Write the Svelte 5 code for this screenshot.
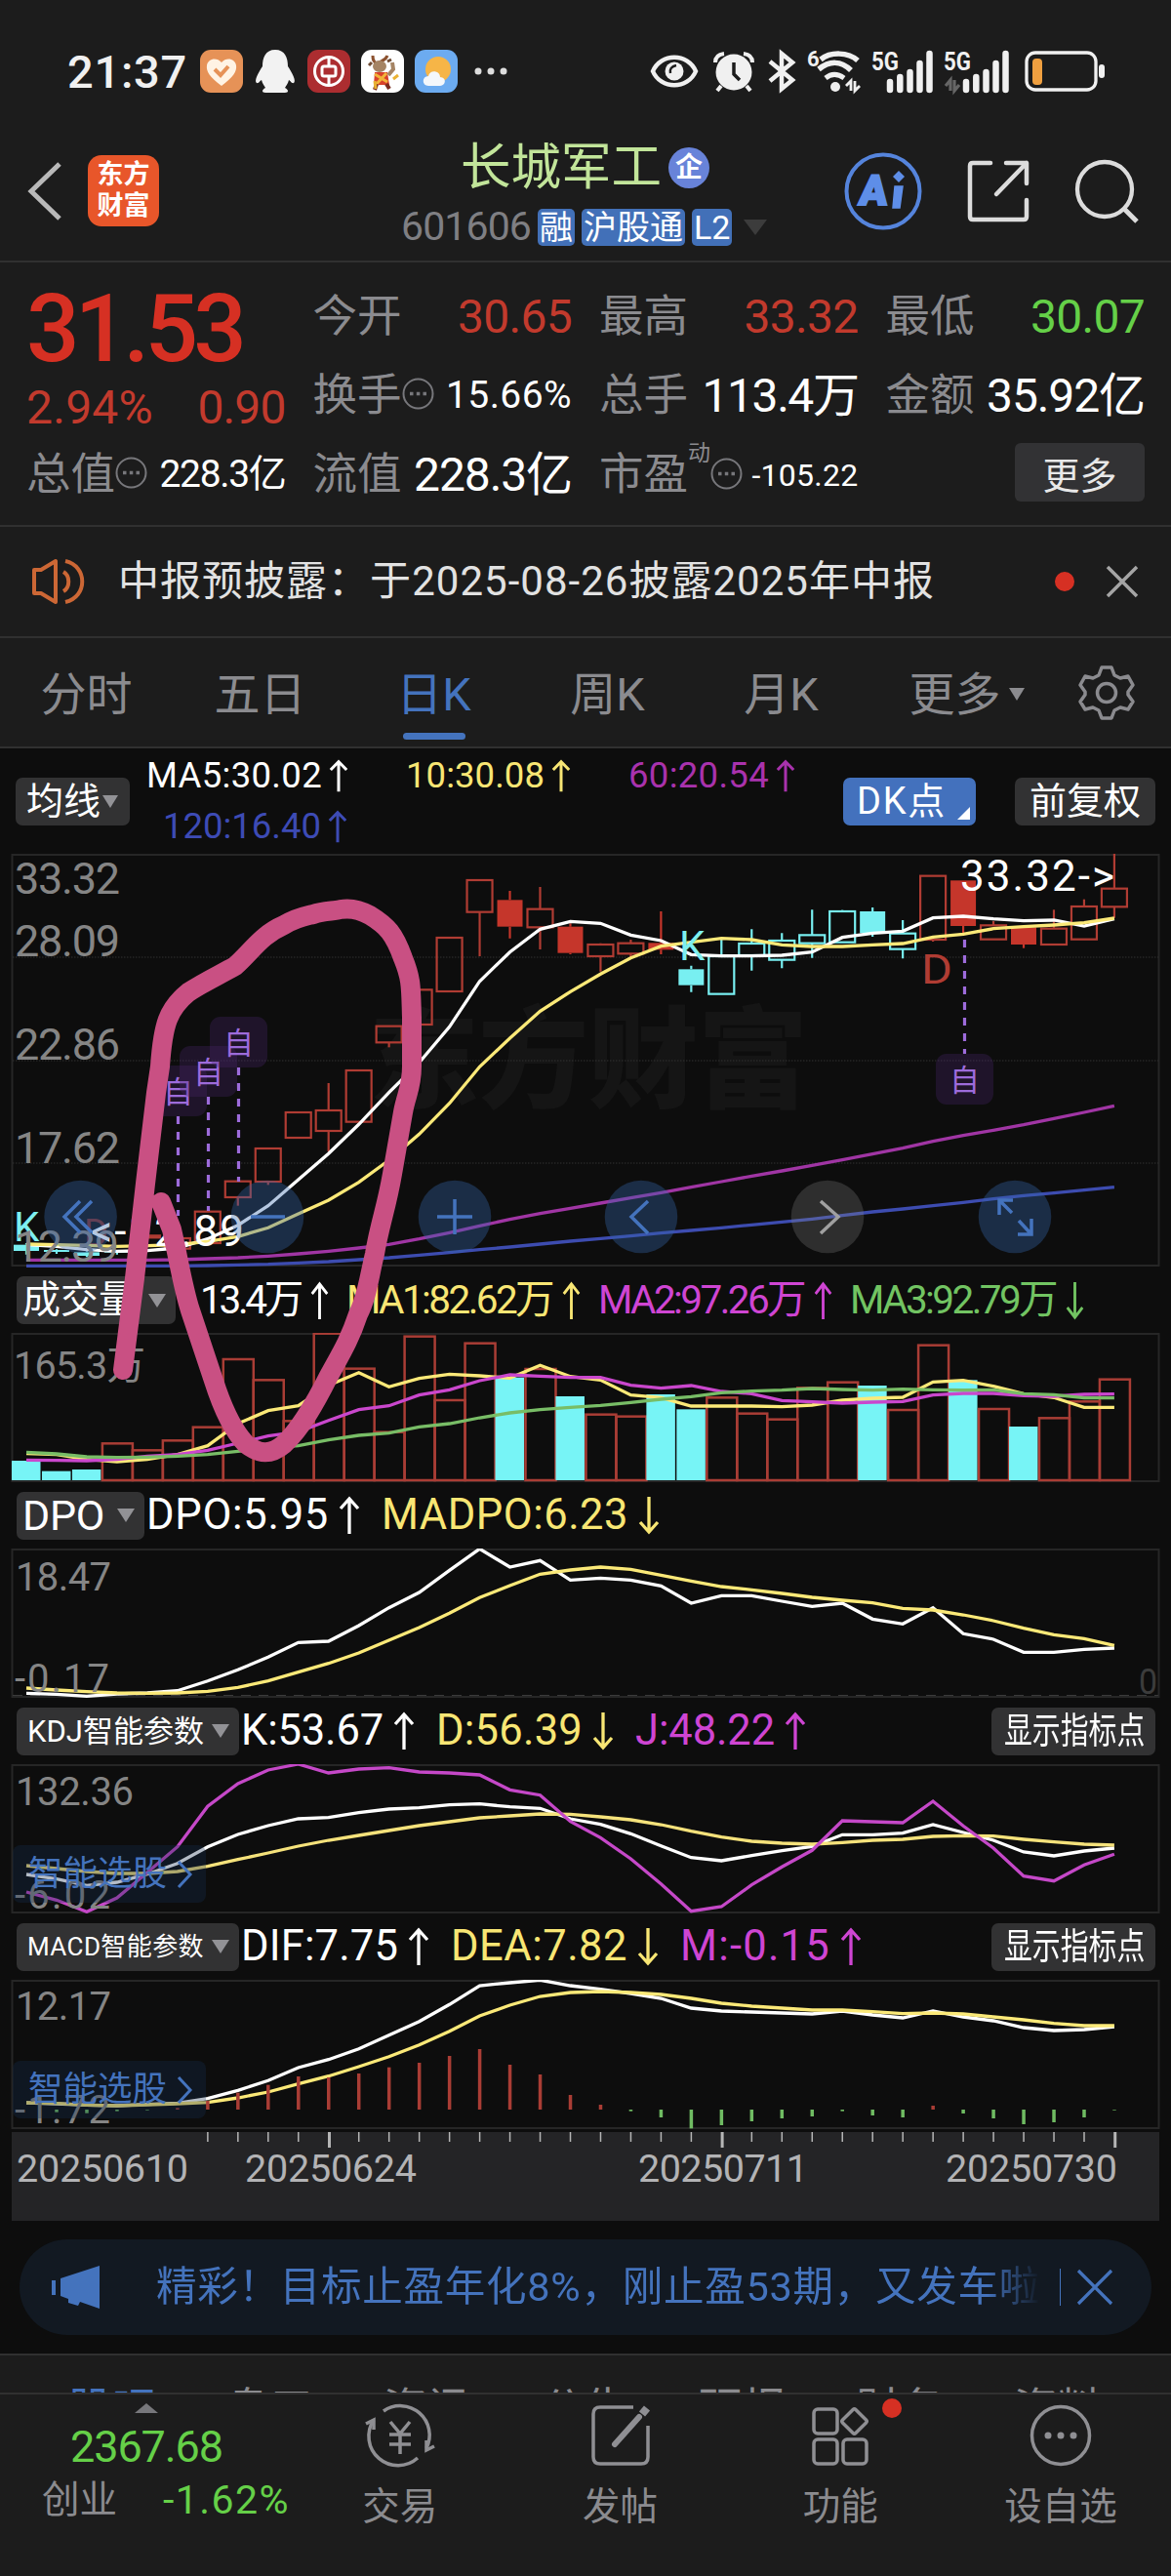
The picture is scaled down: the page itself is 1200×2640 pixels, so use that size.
<script>
	const STEP = 30.97;
	const x = (i) => 27 + i * STEP;

	// chart values are stored in thirds of a pixel, counted from the top of each strip
	const line = (values, top) =>
		values.map((v, i) => x(i).toFixed(1) + ',' + ((v - top) / 3).toFixed(1)).join(' ');

	// spread the letters of a text over a given width
	function fit(node, width) {
		const count = [...node.textContent].length;
		const natural = node.getBoundingClientRect().width;
		node.style.letterSpacing = (width - natural) / count + 'px';
	}

	// [kind, body top, body bottom, high, low]
	const candles = [
		['C', 1250, 1269, 1245, 1280], ['C', 1266, 1272, 1264, 1278], ['C', 1273, 1284, 1270, 1288],
		['C', 1268, 1274, 1266, 1280], ['r', 1222, 1228, 1222, 1228], ['r', 1230, 1262, 1230, 1262],
		['r', 1148, 1245, 1148, 1245], ['r', 1055, 1104, 1055, 1130], ['r', 954, 1056, 954, 1066],
		['r', 843, 921, 843, 921], ['r', 837, 900, 753, 963], ['r', 714, 872, 714, 872],
		['r', 578, 628, 578, 643], ['r', 466, 573, 466, 573], ['r', 306, 471, 306, 471],
		['r', 129, 227, 129, 363], ['R', 190, 272, 162, 308], ['r', 218, 274, 150, 342],
		['R', 272, 353, 262, 357], ['r', 327, 363, 323, 410], ['r', 323, 355, 312, 368],
		['R', 322, 343, 225, 357], ['C', 403, 452, 392, 473], ['c', 363, 479, 310, 479],
		['c', 324, 360, 280, 407], ['c', 315, 374, 292, 400], ['c', 298, 323, 220, 368],
		['c', 225, 320, 221, 320], ['C', 225, 292, 213, 303], ['c', 293, 341, 252, 370],
		['r', 116, 312, 116, 318], ['R', 130, 270, 130, 300], ['r', 268, 311, 255, 311],
		['R', 274, 327, 274, 338], ['r', 278, 327, 220, 327], ['r', 210, 311, 188, 311],
		['r', 155, 211, 48, 245]
	];
	const ma5 = [1250, 1255, 1265, 1270, 1268, 1260, 1232, 1190, 1130, 1050, 970, 880, 782, 690, 580, 440, 350, 280, 256, 262, 298, 315, 358, 362, 362, 360, 350, 305, 292, 286, 245, 240, 248, 254, 252, 270, 248];
	const ma10 = [1248, 1250, 1252, 1255, 1253, 1250, 1240, 1225, 1198, 1155, 1113, 1058, 990, 910, 815, 703, 615, 532, 472, 418, 368, 332, 320, 308, 312, 328, 333, 333, 328, 324, 304, 295, 278, 272, 267, 260, 246];
	const ma60 = [1297, 1297, 1297, 1297, 1297, 1296, 1293, 1290, 1285, 1278, 1270, 1260, 1249, 1232, 1213, 1192, 1172, 1154, 1138, 1122, 1106, 1090, 1073, 1056, 1039, 1023, 1006, 989, 971, 953, 932, 914, 898, 881, 862, 843, 823];
	const ma120 = [1315, 1315, 1315, 1315, 1315, 1315, 1314, 1312, 1310, 1306, 1302, 1296, 1290, 1282, 1274, 1265, 1257, 1248, 1239, 1231, 1223, 1214, 1206, 1198, 1189, 1180, 1171, 1160, 1149, 1140, 1130, 1120, 1109, 1099, 1091, 1082, 1073];

	const volumes = [594, 626, 621, 541, 562, 532, 491, 282, 346, 472, 203, 311, 506, 212, 408, 233, 338, 312, 396, 452, 458, 390, 436, 400, 449, 467, 370, 353, 363, 438, 239, 346, 435, 489, 463, 412, 344];
	const falling = [0, 1, 2, 16, 18, 21, 22, 28, 31, 33];
	const volA = [572, 575, 590, 597, 590, 575, 548, 480, 440, 425, 362, 323, 367, 341, 328, 333, 340, 301, 335, 346, 392, 400, 426, 426, 426, 428, 423, 408, 402, 399, 352, 347, 365, 388, 400, 430, 430];
	const volB = [592, 593, 594, 590, 580, 575, 562, 540, 518, 505, 470, 437, 425, 392, 376, 348, 330, 334, 338, 338, 362, 371, 363, 381, 388, 409, 413, 417, 414, 412, 392, 387, 387, 394, 396, 390, 389];
	const volC = [568, 573, 582, 584, 583, 580, 575, 565, 555, 548, 530, 516, 509, 490, 480, 462, 447, 437, 430, 424, 415, 405, 397, 385, 380, 377, 372, 375, 377, 374, 376, 377, 376, 388, 391, 401, 401];

	const dpo = [1308, 1311, 1317, 1310, 1307, 1300, 1270, 1236, 1197, 1152, 1148, 1100, 1045, 998, 930, 864, 920, 900, 960, 954, 960, 978, 1031, 1008, 1008, 1025, 1041, 1031, 1080, 1095, 1045, 1125, 1142, 1182, 1182, 1173, 1169];
	const madpo = [1292, 1298, 1303, 1307, 1308, 1307, 1302, 1290, 1270, 1243, 1216, 1184, 1145, 1106, 1062, 1014, 977, 942, 929, 920, 927, 945, 963, 980, 990, 1001, 1013, 1022, 1030, 1047, 1052, 1067, 1085, 1108, 1128, 1140, 1161];

	const kdjK = [546, 560, 580, 570, 545, 512, 461, 423, 396, 375, 371, 356, 345, 341, 332, 329, 338, 343, 375, 392, 421, 458, 494, 504, 488, 473, 460, 424, 424, 419, 393, 417, 441, 477, 489, 474, 465];
	const kdjD = [519, 528, 537, 543, 543, 537, 521, 500, 480, 459, 441, 426, 411, 396, 384, 372, 366, 360, 361, 369, 378, 393, 413, 431, 444, 450, 453, 448, 441, 438, 429, 427, 428, 438, 446, 453, 456];
	const kdjJ = [600, 625, 661, 618, 540, 461, 337, 267, 225, 207, 234, 222, 218, 231, 234, 240, 286, 302, 383, 433, 498, 575, 659, 645, 578, 523, 472, 381, 384, 387, 321, 397, 465, 551, 566, 517, 484];

	const dif = [1248, 1251, 1255, 1257, 1253, 1249, 1235, 1210, 1180, 1140, 1115, 1082, 1040, 998, 946, 888, 879, 871, 888, 899, 912, 927, 957, 966, 969, 972, 975, 966, 978, 987, 966, 984, 996, 1017, 1026, 1023, 1014];
	const dea = [1248, 1250, 1255, 1257, 1254, 1251, 1247, 1233, 1215, 1190, 1166, 1137, 1106, 1070, 1028, 981, 948, 921, 909, 906, 909, 915, 927, 942, 951, 957, 963, 963, 968, 974, 972, 975, 984, 993, 1004, 1011, 1011];
	const macd = [0, -8, -11, -5, -2, 5, 27, 52, 76, 102, 99, 111, 130, 144, 165, 186, 138, 108, 45, 15, -5, -24, -58, -48, -36, -27, -21, -5, -18, -24, 12, -12, -27, -45, -39, -24, -2];

	// x, top of the chip, start and end of the dashed line
	const flags = [
		[182.5, 217, 269, 371],
		[213.5, 197, 249, 366],
		[244.5, 167, 219, 336],
		[988.5, 205, 88, 205]
	];

	const tabs = ['分时', '五日', '日K', '周K', '月K', '更多'];
	const pages = ['股吧', '盘口', '资讯', '公告', '研报', '财务', '资料'];
	const ticks = Array.from({ length: 31 }, (_, i) => i + 6);
</script>

{#snippet arrow(up, w)}
	<svg class="arrow" width={w} height="40" viewBox="0 0 22 40" preserveAspectRatio="none">
		<path d={up ? 'M11 39V3M2 13L11 3L20 13' : 'M11 1V37M2 27L11 37L20 27'} fill="none" stroke="currentColor" stroke-width="3.300" />
	</svg>
{/snippet}

{#snippet item(text, width, up, color)}
	<span class="item {color}"><span use:fit={width}>{text}</span>{@render arrow(up, 22)}</span>
{/snippet}

{#snippet info()}
	<svg class="info" width="33" height="33" viewBox="0 0 33 33">
		<circle cx="16.500" cy="16.500" r="15" fill="none" stroke="#77777b" stroke-width="2" />
		<path d="M8 16.500h3.500M14.800 16.500h3.500M21.500 16.500h3.500" stroke="#77777b" stroke-width="3.500" />
	</svg>
{/snippet}

{#snippet signal(dim)}
	<svg class="signal" width={dim ? 67 : 62} height="46" viewBox={dim ? '0 0 67 46' : '4 0 62 46'}>
		<text x={dim ? 0 : 4} y="22" font-size="26" font-weight="700" fill="#f0f0f0" textLength="28" lengthAdjust="spacingAndGlyphs">5G</text>
		{#if dim}
			<path d="M7 43V32L2 38M11 32V43L16 37" stroke="#666" stroke-width="3.200" fill="none" />
		{/if}
		<path d="M23 42V34M33.300 42V29M43.500 42V24M53.500 42V15M63.500 42V5" stroke="#f0f0f0" stroke-width="6.500" stroke-linecap="round" />
	</svg>
{/snippet}

{#snippet caret()}
	<svg class="caret" width="18" height="14" viewBox="0 0 18 14"><path d="M0 0H18L9 14Z" fill="#929296" /></svg>
{/snippet}

<div class="screen">
	<div class="status">
		<span class="time" use:fit={123}>21:37</span>
		<div class="apps">
			<svg width="44" height="44" viewBox="0 0 44 44">
				<rect width="44" height="44" rx="11" fill="#e69257" />
				<path d="M22 37C10 28 6 22 7 16C8 9 17 7 22 13C27 7 36 9 37 16C38 22 34 28 22 37Z" fill="#fff3e4" />
				<path d="M15 20L21 26L29 17" stroke="#e69257" stroke-width="4" fill="none" />
			</svg>
			<svg width="44" height="44" viewBox="0 0 44 44">
				<path d="M22 0C12 0 9 8 9 17C5 23 0 32 3 34C5 35 7 31 8 31C9 35 11 37 12 39C8 41 8 44 12 44H32C36 44 36 41 32 39C33 37 35 35 36 31C37 31 39 35 41 34C44 32 39 23 35 17C35 8 32 0 22 0Z" fill="#f2f2f2" />
			</svg>
			<svg width="44" height="44" viewBox="0 0 44 44">
				<rect width="44" height="44" rx="11" fill="#ac2d30" />
				<circle cx="22" cy="22" r="14.500" fill="none" stroke="#fff" stroke-width="3" />
				<rect x="15" y="17" width="14" height="10" rx="2" fill="none" stroke="#fff" stroke-width="3" />
				<path d="M22 8V17M22 27V36" stroke="#fff" stroke-width="3" />
			</svg>
			<svg width="44" height="44" viewBox="0 0 44 44">
				<rect width="44" height="44" rx="11" fill="#fff" />
				<path d="M12 6C12 13 15 14 18 13C22 11 25 11 27 6" stroke="#8c5230" stroke-width="3" fill="none" />
				<ellipse cx="19" cy="17" rx="7" ry="6" fill="#a58464" />
				<path d="M11 13L8 16M27 12L31 10" stroke="#6e4a32" stroke-width="3" />
				<path d="M14 23H27L29 36H13Z" fill="#d8412b" />
				<path d="M14 25L27 33M26 24L15 36" stroke="#f2b43a" stroke-width="3" />
				<path d="M28 26L33 20L32 13" stroke="#a58464" stroke-width="4" fill="none" />
				<path d="M16 35L14 41M26 35L29 40" stroke="#7a2c20" stroke-width="4" />
				<path d="M33 30L38 26M14 32L15 40" stroke="#eab233" stroke-width="3" />
			</svg>
			<svg width="44" height="44" viewBox="0 0 44 44">
				<rect width="44" height="44" rx="11" fill="#6cabf0" />
				<circle cx="24" cy="20" r="13" fill="#f6b547" />
				<path d="M14 37C7 37 7 27 14 27C15 20 26 21 26 28C33 28 32 37 26 37Z" fill="#f4f7fb" />
			</svg>
		</div>
		<svg class="dots" width="34" height="8" viewBox="0 0 34 8">
			<circle cx="4" cy="4" r="3.500" fill="#ddd" /><circle cx="17" cy="4" r="3.500" fill="#ddd" /><circle cx="30" cy="4" r="3.500" fill="#ddd" />
		</svg>
		<div class="system">
			<svg width="50" height="34" viewBox="0 0 50 34">
				<path d="M3 17C11 -2 39 -2 47 17C39 36 11 36 3 17Z" fill="none" stroke="#f0f0f0" stroke-width="4.500" />
				<circle cx="25" cy="17" r="9.500" fill="#f0f0f0" />
				<path d="M21 19C20 15 22 12 27 11" stroke="#1c1c1c" stroke-width="2.500" fill="none" />
			</svg>
			<svg width="42" height="42" viewBox="0 0 42 42">
				<circle cx="21" cy="22" r="18.500" fill="#f0f0f0" />
				<path d="M2 12Q2 4 11 3M40 12Q40 4 31 3M8 36L4 41M34 36L38 41" stroke="#f0f0f0" stroke-width="4" fill="none" />
				<path d="M21 12V24L27 30" stroke="#1c1c1c" stroke-width="3.500" fill="none" />
			</svg>
			<svg class="bt" width="28" height="42" viewBox="0 0 28 42">
				<path d="M2 11L25 30L14 39V3L25 12L2 31" fill="none" stroke="#f0f0f0" stroke-width="4.500" />
			</svg>
			<svg class="wifi" width="56" height="46" viewBox="0 0 56 46">
				<text x="0" y="18" font-size="22" font-weight="700" fill="#f0f0f0">6</text>
				<path d="M14 11C24 3 42 3 52 12" fill="none" stroke="#f0f0f0" stroke-width="5.500" />
				<path d="M12 20C23 11 35 11 45 21" fill="none" stroke="#f0f0f0" stroke-width="5.500" transform="translate(0 1)" />
				<path d="M19 30C25 25 31 25 38 30" fill="none" stroke="#f0f0f0" stroke-width="5" />
				<circle cx="29" cy="39" r="5" fill="#f0f0f0" />
				<path d="M45 43V33L40 38M49 33V43L54 38" stroke="#f0f0f0" stroke-width="2.800" fill="none" />
			</svg>
			{@render signal(false)}
			{@render signal(true)}
			<svg class="battery" width="83" height="42" viewBox="0 0 83 42">
				<rect x="2" y="2" width="71" height="38" rx="9" fill="none" stroke="#f0f0f0" stroke-width="3.300" />
				<rect x="8" y="8" width="10" height="27" rx="4" fill="#f0a040" />
				<rect x="76" y="14" width="6" height="14" rx="3" fill="#f0f0f0" />
			</svg>
		</div>
	</div>

	<header>
		<svg class="back" width="36" height="60" viewBox="0 0 36 60">
			<path d="M33 2L4 30L33 58" fill="none" stroke="#b9b9b9" stroke-width="5" />
		</svg>
		<div class="logo"><span>东方</span><span>财富</span></div>
		<div class="title">
			<div class="name"><span use:fit={206}>长城军工</span><i>企</i></div>
			<div class="code">
				<span class="num" use:fit={133}>601606</span>
				<b>融</b><b>沪股通</b><b>L2</b>
				<svg width="24" height="16" viewBox="0 0 24 16"><path d="M0 0H24L12 16Z" fill="#3c3c3c" /></svg>
			</div>
		</div>
		<div class="tools">
			<svg width="80" height="80" viewBox="0 0 80 80">
				<circle cx="40" cy="40" r="37.500" fill="none" stroke="#5584dc" stroke-width="4" />
				<g fill="#5e8ee8" stroke="#5e8ee8">
					<text x="15" y="54" font-size="43" font-weight="900" stroke-width="2" transform="translate(5 0) skewX(-6)" textLength="29" lengthAdjust="spacingAndGlyphs">A</text>
					<path d="M52 35H60L57 57H50Z" stroke-width="1.500" />
					<path d="M56 19L62 25L56 31L50 25Z" stroke="none" />
				</g>
			</svg>
			<svg width="64" height="64" viewBox="0 0 64 64" fill="none" stroke="#dcdcdc" stroke-width="4.500" stroke-linecap="round" stroke-linejoin="round">
				<path d="M24 3H6Q3 3 3 6V58Q3 61 6 61H58Q61 61 61 58V41" />
				<path d="M40 3H61V24M61 3L30 35" />
			</svg>
			<svg width="66" height="66" viewBox="0 0 66 66">
				<circle cx="31" cy="31" r="28" fill="none" stroke="#dcdcdc" stroke-width="4.300" />
				<path d="M51 51L64 64" stroke="#dcdcdc" stroke-width="5" />
			</svg>
		</div>
	</header>

	<section class="quote">
		<div class="col price">
			<strong use:fit={221}>31.53</strong>
			<div class="change red"><span use:fit={130}>2.94%</span><span use:fit={90}>0.90</span></div>
			<div class="cell small"><label>总值</label>{@render info()}<em use:fit={129}>228.3亿</em></div>
		</div>
		<div class="col">
			<div class="cell red"><label>今开</label><em use:fit={117}>30.65</em></div>
			<div class="cell small"><label>换手</label>{@render info()}<em use:fit={129}>15.66%</em></div>
			<div class="cell"><label>流值</label><em use:fit={162}>228.3亿</em></div>
		</div>
		<div class="col">
			<div class="cell red"><label>最高</label><em use:fit={117}>33.32</em></div>
			<div class="cell"><label>总手</label><em use:fit={160}>113.4万</em></div>
			<div class="cell tiny"><label>市盈</label><sup>动</sup>{@render info()}<em use:fit={109}>-105.22</em></div>
		</div>
		<div class="col">
			<div class="cell green"><label>最低</label><em use:fit={117}>30.07</em></div>
			<div class="cell"><label>金额</label><em use:fit={162}>35.92亿</em></div>
			<div class="cell"><button>更多</button></div>
		</div>
	</section>

	<section class="notice">
		<svg width="56" height="48" viewBox="0 0 56 48">
			<path d="M3 12H10L25 3V45L10 36H3Z" fill="none" stroke="#cc6735" stroke-width="4" stroke-linejoin="round" />
			<path d="M33 14C40 18 40 30 33 34M35 3C58 8 58 40 35 45" fill="none" stroke="#cc6735" stroke-width="4" />
		</svg>
		<p use:fit={837}>中报预披露：于2025-08-26披露2025年中报</p>
		<i></i>
		<svg width="34" height="34" viewBox="0 0 34 34"><path d="M2 2L32 32M32 2L2 32" stroke="#a5a5a5" stroke-width="3.500" /></svg>
	</section>

	<nav class="tabs">
		{#each tabs as tab, i}
			<span class:active={i === 2}>{tab}{#if i === 5}<svg width="16" height="13" viewBox="0 0 16 13"><path d="M0 0H16L8 13Z" fill="#8b8b8f" /></svg>{/if}</span>
		{/each}
		<div class="gear">
			<svg width="58" height="58" viewBox="0 0 58 58">
				<path d="M24 3H34L37 11L43 14L51 12L56 21L51 28V31L56 38L51 46L43 44L37 47L34 55H24L21 47L15 44L7 46L2 38L7 31V28L2 21L7 12L15 14L21 11Z" fill="none" stroke="#8b8b8f" stroke-width="3.500" stroke-linejoin="round" />
				<circle cx="29" cy="29" r="9.500" fill="none" stroke="#8b8b8f" stroke-width="3.500" />
			</svg>
		</div>
	</nav>

	<section class="charts">
		<div class="averages">
			<span class="chip ma">均线<svg width="16" height="13" viewBox="0 0 16 13"><path d="M0 0H16L8 13Z" fill="#929296" /></svg></span>
			<div class="list">
				<div>
					<span class="white w1"><span use:fit={180}>MA5:30.02</span>{@render arrow(true, 20)}</span>
					<span class="yellow w2"><span use:fit={142}>10:30.08</span>{@render arrow(true, 20)}</span>
					<span class="purple"><span use:fit={144}>60:20.54</span>{@render arrow(true, 20)}</span>
				</div>
				<div class="blue"><span class="w3"><span use:fit={162}>120:16.40</span>{@render arrow(true, 20)}</span></div>
			</div>
			<span class="chip dk"><span use:fit={92}>DK点</span><svg width="13" height="13" viewBox="0 0 13 13"><path d="M13 0V13H0Z" fill="#fff" /></svg></span>
			<span class="chip fq">前复权</span>
		</div>

		<svg class="chart" width="1200" height="424" viewBox="0 0 1200 424">
			<rect x="12.500" y="1" width="1175" height="421" class="frame" />
			<text x="378" y="251" class="mark" textLength="450">东方财富</text>
			{#each [106, 212, 317] as y}
				<line x1="13" x2="1187" y1={y} y2={y} class="grid" />
			{/each}
			<text x="14" y="397" font-size="42" fill="#7deff0">K</text>
			<text x="86" y="402" font-size="38" fill="#7c2a25">D</text>
			{#each candles as [kind, top, bottom, high, low], i}
				{@const solid = kind === 'C' || kind === 'R'}
				{@const color = kind === 'c' || kind === 'C' ? '#78eff1' : solid ? '#c5362b' : '#b03c33'}
				<path d="M{x(i)} {(high - 48) / 3}V{(top - 48) / 3}M{x(i)} {(bottom - 48) / 3}V{(low - 48) / 3}" stroke={color} stroke-width="2.200" />
				<rect x={x(i) - 13} y={(top - 48) / 3} width="26" height={(bottom - top) / 3} fill={solid ? color : 'none'} stroke={color} stroke-width={solid ? 0 : 2.2} />
			{/each}
			<polyline points={line(ma120, 48)} stroke="#3d4cb0" class="plot" />
			<polyline points={line(ma60, 48)} stroke="#a035a4" class="plot" />
			<polyline points={line(ma5, 48)} stroke="#fff" class="plot" />
			<polyline points={line(ma10, 48)} stroke="#fbe978" class="plot" />
			{#each flags as [fx, top, from, to]}
				<line x1={fx} x2={fx} y1={from} y2={to} stroke="#9d6bdb" stroke-width="3.200" stroke-dasharray="8 8" />
				<rect x={fx - 29.5} y={top} width="59" height="52" rx="11" fill="#46246b" fill-opacity=".32" />
				<text x={fx} y={top + 38} font-size="31" fill="#9d6bdb" text-anchor="middle">自</text>
			{/each}
			<text x="696" y="109" font-size="42" fill="#7deff0">K</text>
			<text x="944" y="133" font-size="43" fill="#b03c33" textLength="32" lengthAdjust="spacingAndGlyphs">D</text>
			<g class="axis" font-size="45">
				<text x="15" y="41" textLength="108">33.32</text>
				<text x="15" y="105" textLength="108">28.09</text>
				<text x="15" y="211" textLength="108">22.86</text>
				<text x="15" y="317" textLength="108">17.62</text>
				<text x="15" y="418" textLength="107">12.39</text>
			</g>
			<text x="93" y="402" font-size="44" fill="#fff" textLength="157">&lt;-12.89</text>
			<text x="984" y="38" font-size="44" fill="#fff" textLength="158">33.32-&gt;</text>
			{#each [82.6, 274, 466, 657, 848, 1040] as cx, i}
				<circle {cx} cy="372" r="37.300" fill={i === 4 ? '#8a8a8a' : '#3566ac'} fill-opacity={i === 4 ? 0.27 : 0.36} />
			{/each}
			<g fill="none" stroke="#4473bd" stroke-width="3.500">
				<path d="M82 356L66 372L82 388M94 356L78 372L94 388" />
				<path d="M257 372H292M448 372H484M466 354V390" />
				<path d="M664 356L647 372L664 389" />
				<path d="M841 356L859 372L841 389" stroke="#a0a0a0" />
				<path d="M1038 355H1024V370M1024 355L1037 368M1043 390H1057V374M1057 390L1044 376" />
			</g>
		</svg>

		<div class="legend vol">
			<span class="chip c1">成交量{@render caret()}</span>
			<span class="item white"><span use:fit={103}>13.4万</span>{@render arrow(true, 19)}</span>
			<span class="item yellow"><span use:fit={211}>MA1:82.62万</span>{@render arrow(true, 19)}</span>
			<span class="item magenta"><span use:fit={211}>MA2:97.26万</span>{@render arrow(true, 19)}</span>
			<span class="item lime"><span use:fit={211}>MA3:92.79万</span>{@render arrow(false, 19)}</span>
		</div>
		<svg class="chart" width="1200" height="153" viewBox="0 0 1200 153">
			<rect x="12.500" y="1" width="1175" height="151" class="frame" />
			<text x="14" y="47" class="axis" font-size="39.500" textLength="135">165.3万</text>
			{#each volumes as v, i}
				{#if falling.includes(i)}
					<rect x={x(i) - 15} y={(v - 201) / 3} width="29.500" height={(654 - v) / 3} fill="#77f4f6" />
				{:else}
					<rect x={x(i) - 15} y={(v - 201) / 3} width="31" height={(654 - v) / 3} fill="none" stroke="#a93d35" stroke-width="2.500" />
				{/if}
			{/each}
			<polyline points={line(volA, 201)} stroke="#fbe978" class="plot" />
			<polyline points={line(volB, 201)} stroke="#ca47cd" class="plot" />
			<polyline points={line(volC, 201)} stroke="#78bd66" class="plot" />
		</svg>

		<div class="legend">
			<span class="chip c2"><span use:fit={84}>DPO</span>{@render caret()}</span>
			{@render item('DPO:5.95', 187, true, 'white')}
			{@render item('MADPO:6.23', 253, false, 'yellow')}
		</div>
		<svg class="chart" width="1200" height="153" viewBox="0 0 1200 153">
			<rect x="12.500" y="1" width="1175" height="151" class="frame" />
			<line x1="13" x2="1187" y1="150.500" y2="150.500" stroke="#3a3a3a" stroke-dasharray="10 8" />
			<polyline points={line(dpo, 863)} stroke="#fff" class="plot" />
			<polyline points={line(madpo, 863)} stroke="#fbe978" class="plot" />
			<g class="axis" font-size="40">
				<text x="16" y="43" textLength="98">18.47</text>
				<text x="15" y="147" textLength="97">-0.17</text>
			</g>
			<text x="1167" y="149" font-size="36" fill="#3c3c3c" textLength="19" lengthAdjust="spacingAndGlyphs">0</text>
		</svg>

		<div class="legend">
			<span class="chip c3 kdj"><span use:fit={181}>KDJ智能参数</span>{@render caret()}</span>
			{@render item('K:53.67', 146, true, 'white')}
			{@render item('D:56.39', 150, false, 'yellow')}
			{@render item('J:48.22', 143, true, 'magenta')}
			<span class="chip show"><span>显示指标点</span></span>
		</div>
		<div class="strip">
			<svg class="chart" width="1200" height="153" viewBox="0 0 1200 153">
				<rect x="12.500" y="1" width="1175" height="151" class="frame" />
				<polyline points={line(kdjK, 207)} stroke="#fff" class="plot" />
				<polyline points={line(kdjD, 207)} stroke="#f5e27b" class="plot" />
				<polyline points={line(kdjJ, 207)} stroke="#c548c8" class="plot" />
				<g class="axis" font-size="40">
					<text x="16" y="42" textLength="121">132.36</text>
					<text x="15" y="148" textLength="98">-6.02</text>
				</g>
			</svg>
			<div class="pick">智能选股<svg width="16" height="30" viewBox="0 0 16 30"><path d="M2 2L14 15L2 28" fill="none" stroke="#4473bd" stroke-width="3" /></svg></div>
		</div>

		<div class="legend">
			<span class="chip c3 mac"><span use:fit={181}>MACD智能参数</span>{@render caret()}</span>
			{@render item('DIF:7.75', 161, true, 'white')}
			{@render item('DEA:7.82', 181, false, 'yellow')}
			{@render item('M:-0.15', 154, true, 'magenta')}
			<span class="chip show"><span>显示指标点</span></span>
		</div>
		<div class="strip">
			<svg class="chart" width="1200" height="153" viewBox="0 0 1200 153">
				<rect x="12.500" y="1" width="1175" height="151" class="frame" />
				<polyline points={line(dif, 870)} stroke="#fff" class="plot" />
				<polyline points={line(dea, 870)} stroke="#fbe978" class="plot" />
				{#each macd as v, i}
					<rect x={x(i) - 1.7} y={133 - Math.max(v, 0) / 3} width="3.500" height={Math.abs(v) / 3} fill={v > 0 ? '#a93d35' : '#6fbb62'} />
				{/each}
				<g class="axis" font-size="40">
					<text x="16" y="41" textLength="98">12.17</text>
					<text x="15" y="147" textLength="98">-1.72</text>
				</g>
			</svg>
			<div class="pick">智能选股<svg width="16" height="30" viewBox="0 0 16 30"><path d="M2 2L14 15L2 28" fill="none" stroke="#4473bd" stroke-width="3" /></svg></div>
		</div>

		<svg class="dates" width="1200" height="91" viewBox="0 0 1200 91">
			<rect x="12" width="1176" height="91" fill="#242426" />
			{#each ticks as i}
				<rect x={x(i) - 0.7} width={(i - 10) % 13 === 0 ? 3 : 1.5} height={(i - 10) % 13 === 0 ? 16 : 10} fill="#b5b5b5" />
			{/each}
			<g font-size="39.500" fill="#b3b3b5">
				<text x="17" y="51" textLength="176">20250610</text>
				<text x="251" y="51" textLength="176">20250624</text>
				<text x="654" y="51" textLength="174">20250711</text>
				<text x="969" y="51" textLength="176">20250730</text>
			</g>
		</svg>

		<div class="promo">
			<svg width="50" height="44" viewBox="0 0 50 44">
				<path d="M1 15H5V30H1ZM10 13L50 0V44L30 37L28 41L18 38V34L10 31Z" fill="#4473bd" />
			</svg>
			<p><span use:fit={906}>精彩！目标止盈年化8%，刚止盈53期，又发车啦</span></p>
			<i></i>
			<svg width="36" height="36" viewBox="0 0 36 36"><path d="M1 1L35 35M35 1L1 35" stroke="#4473bd" stroke-width="3.200" /></svg>
		</div>
	</section>

	<div class="pages">
		{#each pages as page, i}
			<span class:active={i === 0}>{page}</span>
		{/each}
	</div>

	<footer>
		<div class="index">
			<svg width="24" height="10" viewBox="0 0 24 10"><path d="M0 10H24L12 0Z" fill="#77777b" /></svg>
			<span class="points" use:fit={156}>2367.68</span>
			<div><span>创业</span><em use:fit={130}>-1.62%</em></div>
		</div>
		<div class="action">
			<svg width="72" height="66" viewBox="0 0 72 66" fill="none" stroke="#8f8f93" stroke-width="3.500">
				<path d="M19 8A30 30 0 0 1 63 46M54 56A30 30 0 0 1 9 17" />
				<path d="M1 21L9 17V27M71 44L63 48V38" />
				<path d="M26 19L36 31L46 19M36 31V52M25 32H47M25 42H47" />
			</svg>
			<span>交易</span>
		</div>
		<div class="action">
			<svg width="60" height="66" viewBox="0 0 60 66" fill="none" stroke="#8f8f93" stroke-width="3.500">
				<path d="M43 4H9Q2 4 2 11V55Q2 62 9 62H51Q58 62 58 55V23" />
				<path d="M24 42L49 14" stroke-width="6" stroke-linecap="round" /><path d="M52 11L57 5" stroke-width="8" />
			</svg>
			<span>发帖</span>
		</div>
		<div class="action">
			<svg width="60" height="66" viewBox="0 0 60 66" fill="none" stroke="#8f8f93" stroke-width="3.500">
				<rect x="3" y="6" width="24" height="25" rx="4" /><rect x="3" y="37" width="24" height="25" rx="4" />
				<rect x="33" y="37" width="24" height="25" rx="4" />
				<rect x="35" y="9" width="19" height="19" rx="2" transform="rotate(45 44.500 18.500)" />
			</svg>
			<i></i>
			<span>功能</span>
		</div>
		<div class="action">
			<svg width="64" height="66" viewBox="0 0 64 66">
				<circle cx="32" cy="33" r="29.500" fill="none" stroke="#8f8f93" stroke-width="3.500" />
				<circle cx="19" cy="33" r="3.500" fill="#8f8f93" /><circle cx="32" cy="33" r="3.500" fill="#8f8f93" /><circle cx="45" cy="33" r="3.500" fill="#8f8f93" />
			</svg>
			<span>设自选</span>
		</div>
	</footer>

	<svg class="scribble" width="1200" height="2640" viewBox="0 0 1200 2640">
		<path d="M126 1404L138 1310L149 1213L160 1120L164 1093C167 1050 172 1034 193 1017C210 1006 225 999 241 990C258 975 268 958 291 948C305 940 313 939 321 937C332 933 342 934 349 932C360 930 370 933 379 938C397 949 404 957 413 982C422 1004 421 1012 422 1043V1093C422 1115 416 1122 413 1140L402 1203C396 1238 389 1255 384 1285C378 1310 376 1330 367 1347C358 1374 349 1388 337 1410C322 1440 308 1464 291 1480C278 1491 266 1491 252 1480C236 1463 226 1437 219 1415L195 1343C187 1318 183 1290 176 1260L165 1232" />
	</svg>
</div>

<style>
	:global(body) {
		margin: 0;
		background: #1c1c1c;
	}
	.screen {
		position: relative;
		width: 1200px;
		height: 2640px;
		overflow: hidden;
		background: #1c1c1c;
		color: #8b8b8f;
		font-family: Roboto, 'Noto Sans CJK SC', sans-serif;
		line-height: 1;
		white-space: nowrap;
	}
	svg {
		display: block;
		flex: none;
		overflow: visible;
	}
	i,
	em {
		font-style: normal;
	}
	p {
		margin: 0;
	}
	.red { color: #c23a2d; }
	.green { color: #65d048; }
	.white { color: #fff; }
	.yellow { color: #f8e674; }
	.magenta { color: #cf45d3; }
	.purple { color: #a932ad; }
	.blue { color: #3d4bb5; }
	.lime { color: #72c462; }

	.status {
		display: flex;
		align-items: center;
		box-sizing: border-box;
		height: 100px;
		padding: 46px 67px 0 69px;
	}
	.time {
		color: #f0f0f0;
		font-size: 47px;
		font-weight: 500;
	}
	.apps {
		display: flex;
		gap: 11px;
		margin-left: 13px;
	}
	.dots {
		margin-left: 17px;
	}
	.system {
		display: flex;
		align-items: center;
		margin-left: auto;
	}
	.system svg + svg {
		margin-left: 14.500px;
	}
	.system .bt + .wifi {
		margin-left: 12px;
	}
	.system .wifi + .signal {
		margin-left: 10px;
	}
	.system .signal + .signal {
		margin-left: 12px;
	}
	.system .signal + .battery {
		margin-left: 16px;
	}

	header {
		display: flex;
		align-items: center;
		box-sizing: border-box;
		height: 169px;
		padding: 0 33px 0 28px;
		border-bottom: 2px solid #303030;
	}
	.back {
		margin-top: 24px;
	}
	.logo {
		display: flex;
		flex-direction: column;
		align-items: center;
		justify-content: center;
		gap: 5px;
		width: 73px;
		height: 73px;
		margin: 24px 0 0 26px;
		border-radius: 14px;
		background: #e8562a;
		color: #fff;
		font-size: 27px;
		font-weight: 700;
	}
	.title {
		width: 378px;
		margin: 32px 0 0 248px;
	}
	.name {
		display: flex;
		align-items: center;
		gap: 7px;
		padding-left: 61px;
		color: #c2e59a;
		font-size: 51.500px;
	}
	.name i {
		width: 42px;
		height: 42px;
		border-radius: 50%;
		background: #6883d9;
		color: #fff;
		font-size: 28px;
		font-weight: 700;
		line-height: 42px;
		text-align: center;
	}
	.code {
		display: flex;
		align-items: center;
		gap: 7px;
		margin-top: 15px;
	}
	.num {
		color: #7f7f83;
		font-size: 41px;
	}
	.code b {
		padding: 0 2px;
		border-radius: 5px;
		background: #4270b8;
		color: #fff;
		font-size: 34px;
		font-weight: 400;
		line-height: 38px;
	}
	.code svg {
		margin-left: 5px;
	}
	.tools {
		display: flex;
		align-items: center;
		gap: 46px;
		margin: 24px 0 0 auto;
	}

	.quote {
		display: flex;
		gap: 28px;
		box-sizing: border-box;
		height: 271px;
		padding: 15px 27px 0;
		border-bottom: 2px solid #303030;
	}
	.col {
		flex: 1;
	}
	.cell {
		display: flex;
		align-items: center;
		height: 81.300px;
		font-size: 48px;
	}
	.cell label {
		color: #8b8b8f;
		font-size: 45.500px;
	}
	.cell em {
		margin-left: auto;
	}
	.cell:not(.red):not(.green) em {
		color: #fff;
	}
	.cell .info {
		margin-top: -4px;
	}
	.small em {
		font-size: 39px;
	}
	.tiny em {
		font-size: 32px;
	}
	.cell sup {
		align-self: flex-start;
		margin-top: 6px;
		font-size: 23px;
	}
	.price strong {
		display: inline-block;
		height: 117px;
		color: #d63023;
		font-size: 96px;
		font-weight: 500;
		line-height: 107px;
	}
	.change {
		display: flex;
		justify-content: space-between;
		height: 45px;
		font-size: 48px;
		line-height: 33px;
	}
	.cell button {
		width: 133px;
		height: 60px;
		margin: -6px 0 0 auto;
		padding: 0;
		border: 0;
		border-radius: 6px;
		background: #323234;
		color: #e8e8e8;
		font: 38px 'Noto Sans CJK SC', sans-serif;
		line-height: 57px;
	}

	.notice {
		display: flex;
		align-items: center;
		box-sizing: border-box;
		height: 114px;
		padding: 0 33px 0 32px;
		border-bottom: 2px solid #303030;
		color: #e2e2e2;
		font-size: 42px;
	}
	.notice p {
		margin-left: 33px;
	}
	.notice i {
		width: 20px;
		height: 20px;
		margin: 0 32px 0 auto;
		border-radius: 50%;
		background: #d63023;
	}

	.tabs {
		display: flex;
		box-sizing: border-box;
		height: 113px;
		border-bottom: 2px solid #303030;
		font-size: 47px;
	}
	.tabs span {
		position: relative;
		display: flex;
		align-items: center;
		justify-content: center;
		box-sizing: border-box;
		width: 178px;
		padding: 3px 1px 0 0;
	}
	.tabs span svg {
		margin-left: 8px;
	}
	.tabs span:nth-child(6) {
		width: 190px;
		padding-left: 12px;
		margin-right: -12px;
	}
	.tabs .active {
		color: #4473bd;
	}
	.tabs .active::after {
		content: '';
		position: absolute;
		bottom: 7px;
		left: 57px;
		width: 64px;
		height: 7px;
		border-radius: 4px;
		background: #4473bd;
	}
	.gear {
		display: flex;
		align-items: center;
		margin-left: 37px;
	}

	.charts {
		background: #0d0d0d;
		border-bottom: 2px solid #303030;
	}
	.chip {
		display: flex;
		align-items: center;
		box-sizing: border-box;
		height: 49px;
		border-radius: 7px;
		background: #323233;
		color: #fff;
		font-size: 38px;
	}
	.averages {
		display: flex;
		align-items: center;
		box-sizing: border-box;
		height: 108px;
		padding: 0 16px;
	}
	.ma {
		width: 117px;
		padding-left: 11px;
	}
	.ma svg {
		margin-left: 2px;
	}
	.list {
		width: 731px;
		font-size: 36.500px;
	}
	.list div {
		display: flex;
		height: 52px;
		padding-left: 17px;
	}
	.list div > span {
		display: flex;
		align-items: center;
		gap: 7px;
	}
	.list :global(.arrow) {
		height: 34px;
	}
	.w1 { width: 266px; }
	.w2 { width: 228px; }
	.w3 { padding-left: 17px; }
	.dk {
		position: relative;
		width: 136px;
		padding-left: 14px;
		background: #4371bd;
	}
	.dk svg {
		position: absolute;
		right: 6px;
		bottom: 6px;
	}
	.fq {
		width: 144px;
		margin-left: auto;
		justify-content: center;
	}
	.frame {
		fill: none;
		stroke: #262626;
		stroke-width: 2px;
	}
	.grid {
		stroke: #333;
		stroke-width: 1px;
		stroke-dasharray: 1.500 1.500;
	}
	.plot {
		fill: none;
		stroke-width: 3.300px;
	}
	.chart {
		overflow: hidden;
	}
	.axis {
		fill: #858585;
	}
	.mark {
		fill: #151515;
		font-size: 113px;
		font-weight: 900;
	}
	.legend {
		display: flex;
		align-items: center;
		gap: 22px;
		height: 68px;
		padding: 0 16px 0 17px;
		font-size: 43.500px;
	}
	.item {
		display: flex;
		align-items: center;
		gap: 10px;
	}
	.vol {
		gap: 18px;
		height: 67px;
		font-size: 40.500px;
	}
	.vol .chip {
		margin-right: 8px;
	}
	.legend .chip + .item {
		margin-left: -20px;
	}
	.vol .chip + .item {
		margin-left: -1px;
	}
	.caret {
		margin-left: auto;
	}
	.c1,
	.c2,
	.c3 {
		flex: none;
		padding: 0 10px 0 6px;
	}
	.c1 {
		width: 163px;
		font-size: 39px;
	}
	.c2 {
		width: 131px;
		font-size: 43px;
	}
	.c3 {
		width: 228px;
		padding-left: 11px;
		font-size: 31px;
	}
	.mac {
		font-size: 26px;
	}
	.show {
		width: 168px;
		margin-left: auto;
		padding-left: 13px;
	}
	.show span {
		width: 155px;
		font-size: 37px;
		transform: scaleX(0.78);
		transform-origin: left;
	}
	.strip {
		position: relative;
	}
	.pick {
		position: absolute;
		left: 13px;
		top: 83px;
		display: flex;
		align-items: center;
		gap: 10px;
		box-sizing: border-box;
		width: 198px;
		height: 59px;
		padding-left: 16px;
		border-radius: 8px;
		background: rgba(22, 48, 82, 0.32);
		color: #4473bd;
		font-size: 35.500px;
	}
	.dates {
		padding-top: 3px;
	}

	.promo {
		display: flex;
		align-items: center;
		box-sizing: border-box;
		width: 1160px;
		height: 98px;
		margin: 19px 20px;
		padding: 0 40px 0 32px;
		border-radius: 49px;
		background: #121922;
		color: #4473bd;
		font-size: 41.500px;
	}
	.promo p {
		width: 906px;
		margin-left: 58px;
		line-height: 60px;
		-webkit-mask-image: linear-gradient(to right, #000 94%, transparent);
		mask-image: linear-gradient(to right, #000 94%, transparent);
	}
	.promo i {
		width: 1px;
		height: 38px;
		margin: 0 17px 0 auto;
		background: #4473bd;
	}

	.pages {
		display: flex;
		box-sizing: border-box;
		height: 40px;
		padding: 33px 0 0 34px;
		overflow: hidden;
		border-bottom: 2px solid #303030;
		font-size: 45px;
	}
	.pages span {
		width: 161.500px;
		text-align: center;
	}
	.pages .active {
		color: #4473bd;
	}

	footer {
		display: flex;
		height: 186px;
	}
	.index {
		display: flex;
		flex-direction: column;
		width: 297px;
	}
	.index > svg {
		margin: 9px 0 0 138px;
	}
	.points {
		align-self: flex-start;
		margin: 12px 0 0 72px;
		color: #65d048;
		font-size: 45px;
	}
	.index div {
		display: flex;
		align-items: center;
		justify-content: space-between;
		margin-top: 12px;
		padding-left: 43px;
		font-size: 38.500px;
	}
	.index em {
		color: #65d048;
		font-size: 41px;
	}
	.action {
		position: relative;
		display: flex;
		flex: 1;
		flex-direction: column;
		align-items: center;
		gap: 21px;
		padding-top: 9px;
		font-size: 38.500px;
	}
	.action i {
		position: absolute;
		left: 155px;
		top: 4px;
		width: 20px;
		height: 20px;
		border-radius: 50%;
		background: #d63023;
	}
	.scribble {
		position: absolute;
		left: 0;
		top: 0;
		pointer-events: none;
	}
	.scribble path {
		fill: none;
		stroke: #c95083;
		stroke-width: 20px;
		stroke-linecap: round;
		stroke-linejoin: round;
	}
</style>
